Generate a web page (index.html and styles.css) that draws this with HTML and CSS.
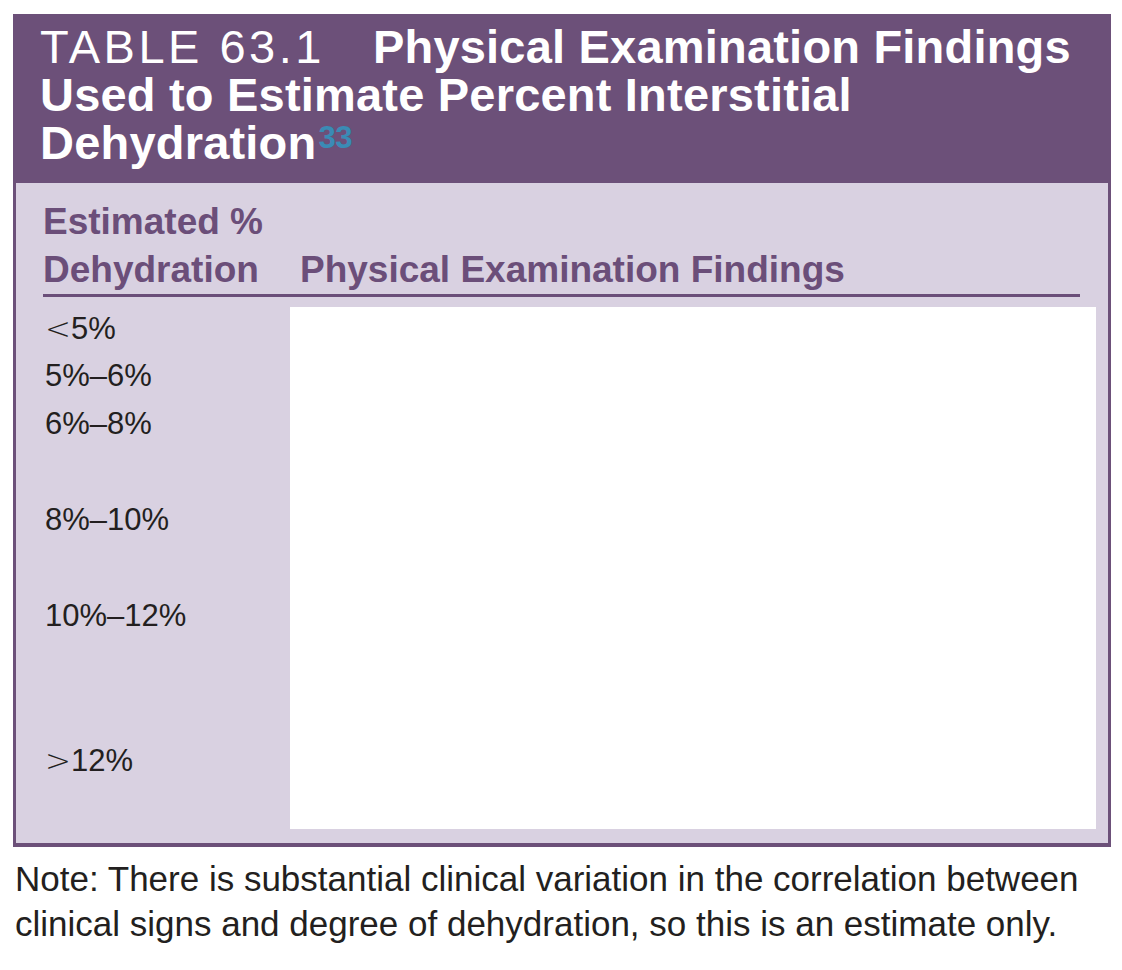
FILE: index.html
```html
<!DOCTYPE html>
<html lang="en">
<head>
<meta charset="utf-8">
<title>Table 63.1</title>
<link rel="stylesheet" href="styles.css">
</head>
<body>
<div class="page">
  <div class="table-box">
    <div class="title">
      <span class="label">TABLE 63.1</span><span class="name">Physical Examination Findings<br>Used to Estimate Percent Interstitial<br>Dehydration<sup class="ref">33</sup></span>
    </div>
    <div class="body">
      <div class="thead">
        <div class="th th-pct">Estimated %<br>Dehydration</div>
        <div class="th th-find">Physical Examination Findings</div>
      </div>
      <div class="rows">
        <div class="pct-col">
          <div class="pct"><span class="op">&lt;</span>5%</div>
          <div class="pct">5%–6%</div>
          <div class="pct span2">6%–8%</div>
          <div class="pct span2">8%–10%</div>
          <div class="pct span3">10%–12%</div>
          <div class="pct"><span class="op">&gt;</span>12%</div>
        </div>
        <div class="findings"></div>
      </div>
    </div>
  </div>
  <p class="note">Note: There is substantial clinical variation in the correlation between<br>clinical signs and degree of dehydration, so this is an estimate only.</p>
</div>
</body>
</html>
```

FILE: styles.css
```css
html, body {
  margin: 0;
  padding: 0;
  background: #ffffff;
}

.page {
  padding: 14px 0 0 13px;
  font-family: "Liberation Sans", Arial, sans-serif;
}

.table-box {
  width: 1092px;
  border: 3px solid #6c5079;
  border-top: 0;
  border-bottom-width: 4px;
  background: #d9d1e1;
}

.title {
  background: #6c5079;
  color: #ffffff;
  padding: 9px 20px 16px 24px;
  font-size: 47px;
  line-height: 48px;
  font-weight: bold;
  letter-spacing: 0.2px;
}

.label {
  font-weight: normal;
  letter-spacing: 3.5px;
  margin-right: 48px;
}

.ref {
  font-size: 31px;
  line-height: 0;
  vertical-align: 11px;
  color: #3a8bb5;
  letter-spacing: -0.5px;
  margin-left: 2px;
}

.body {
  padding: 15px 28px 14px 27px;
}

.thead {
  display: flex;
}

.th {
  color: #6b4e79;
  font-weight: bold;
  font-size: 37px;
  line-height: 48px;
  border-bottom: 3px solid #6b4e79;
}

.th-pct {
  width: 257px;
}

.th-find {
  flex: 1;
  align-self: flex-end;
}

.rows {
  display: flex;
}

.pct-col {
  width: 245px;
  padding: 7px 0 0 2px;
  font-size: 31px;
  line-height: 48px;
  color: #231f20;
}

.pct {
  height: 48px;
}

.pct.span2 {
  height: 96px;
}

.pct.span3 {
  height: 144px;
}

.op {
  font-family: "DejaVu Sans", sans-serif;
  font-weight: 200;
}

.findings {
  flex: 1;
  margin-top: 10px;
  margin-right: -16px;
  height: 522px;
  background: #ffffff;
}

.note {
  margin: 9px 0 0 2px;
  font-size: 35px;
  line-height: 45px;
  color: #231f20;
}
```
